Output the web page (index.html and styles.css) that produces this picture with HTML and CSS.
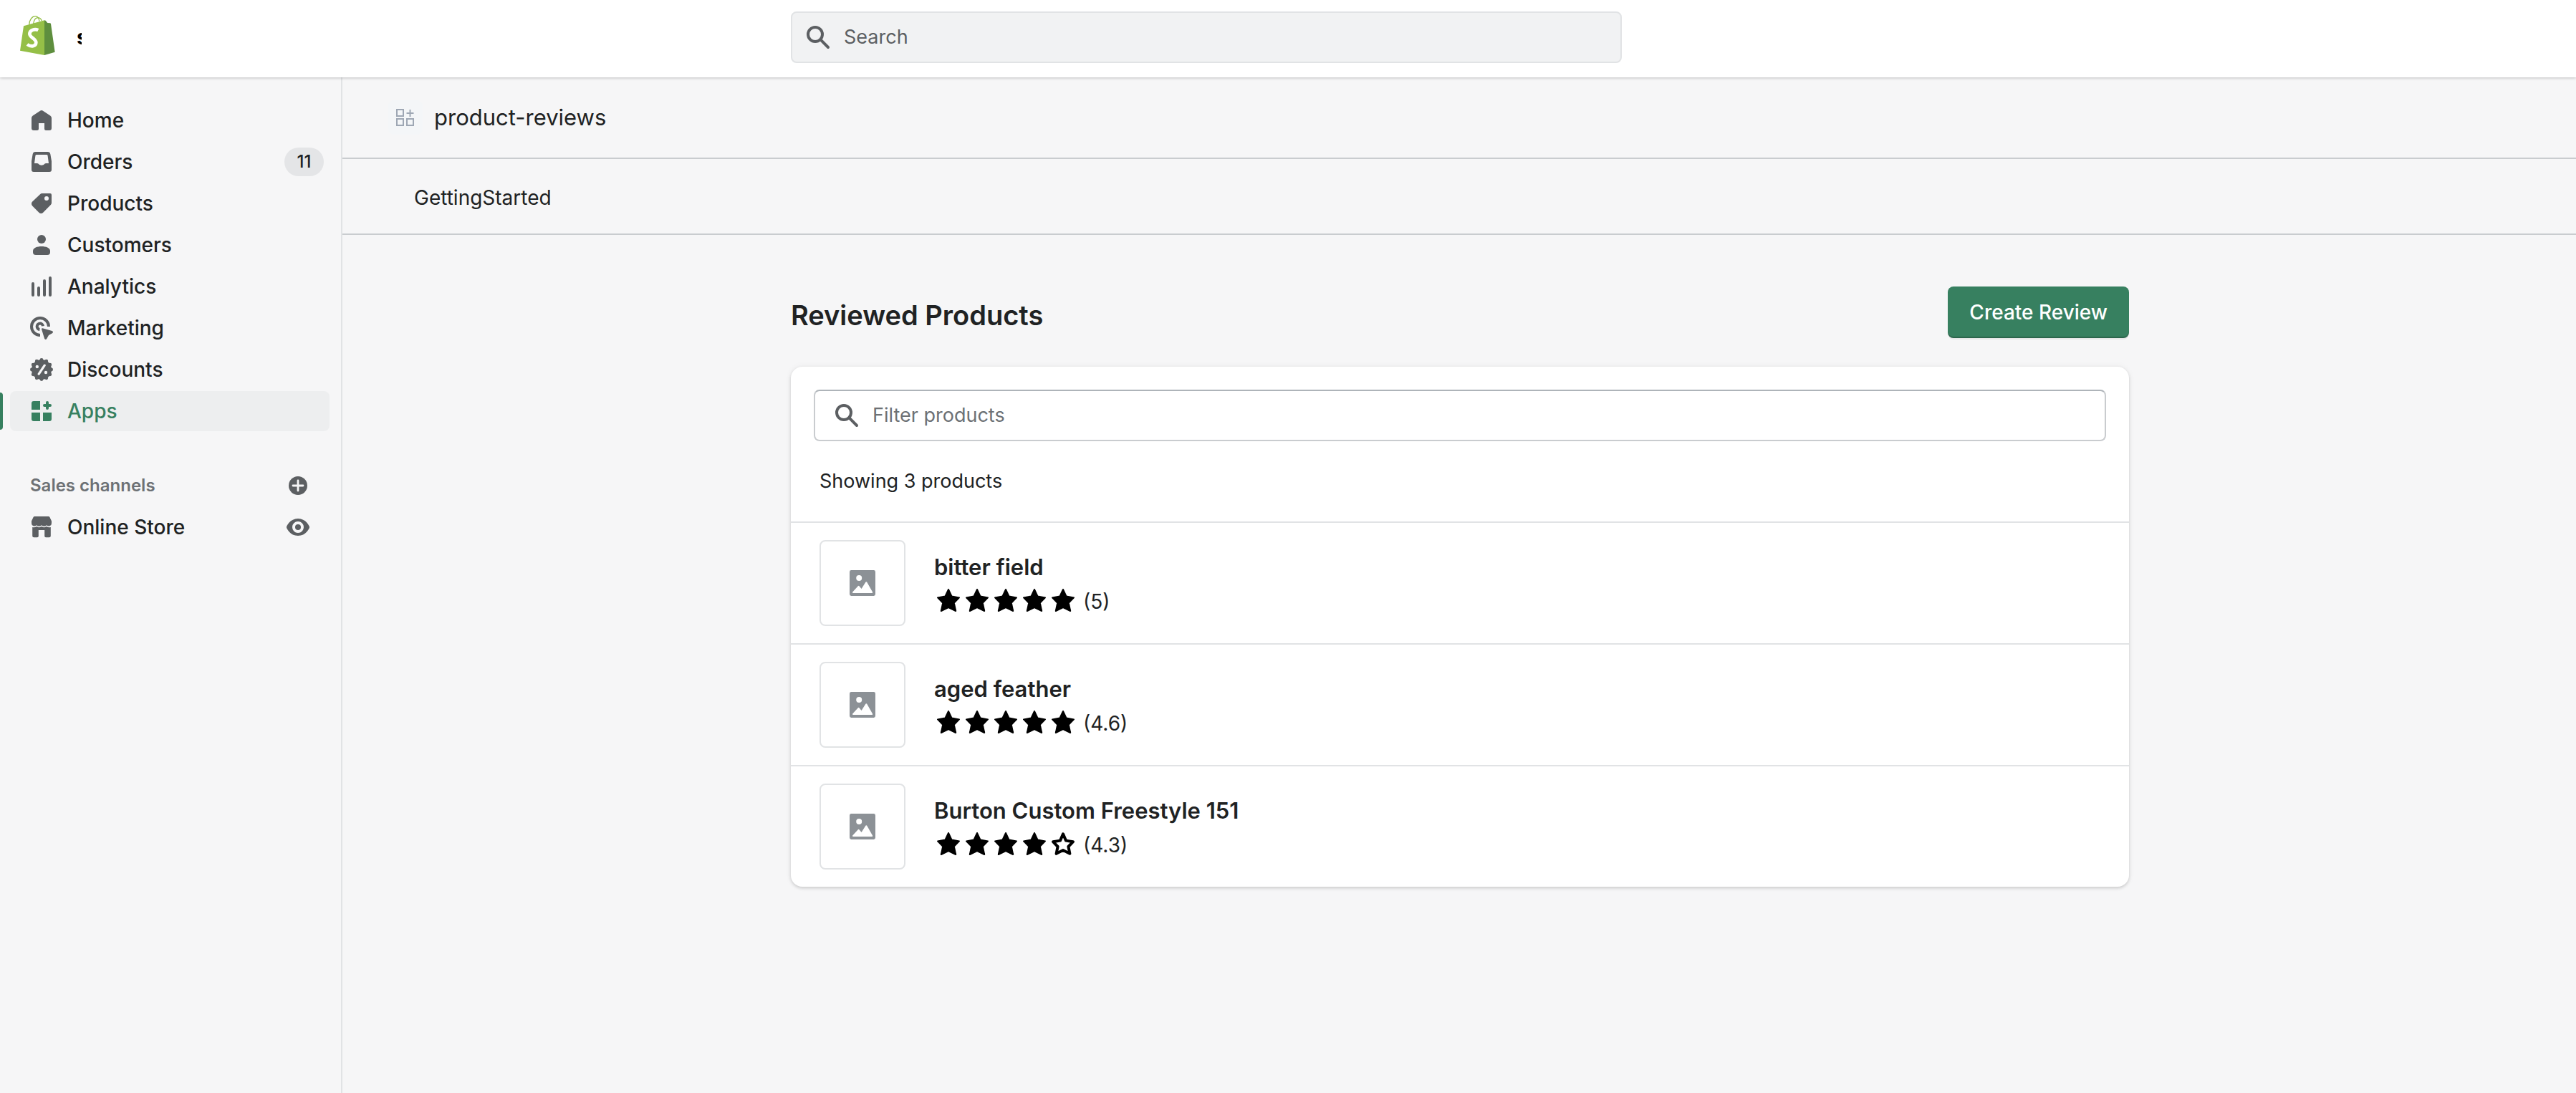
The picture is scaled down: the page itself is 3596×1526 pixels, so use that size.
FILE: index.html
```html
<!DOCTYPE html>
<html lang="en">
<head>
<meta charset="utf-8">
<meta name="viewport" content="width=device-width, initial-scale=1">
<title>product-reviews</title>
<link rel="stylesheet" href="styles.css">
</head>
<body>
<svg class="sprite" aria-hidden="true">
  <symbol id="star" viewBox="0 0 20 20"><path d="M10 2.500l2.300 4.800 5.200.9-3.600 3.700 1.200 5.600L10 15l-5.100 2.500 1.200-5.600L2.500 8.200l5.200-.9z" fill="currentColor" stroke="currentColor" stroke-linejoin="round"/></symbol>
  <symbol id="star-empty" viewBox="0 0 20 20"><path d="M10 3.200l2 4.600 5 .8-3.300 3.400 1 4.900L10 14.500l-4.700 2.400 1-4.900L3 8.600l5-.8z" fill="none" stroke="currentColor" stroke-width="2" stroke-linejoin="round"/></symbol>
  <symbol id="search" viewBox="0 0 20 20"><g fill="none" stroke="currentColor" stroke-width="2"><circle cx="8" cy="8" r="5"/><path d="M11.600 11.600L17 17" stroke-linecap="round"/></g></symbol>
  <symbol id="image" viewBox="0 0 18 18"><path fill="currentColor" fill-rule="evenodd" d="M1.200 0h15.600A1.200 1.200 0 0 1 18 1.200v15.600a1.200 1.200 0 0 1-1.200 1.200H1.200A1.200 1.200 0 0 1 0 16.800V1.200A1.200 1.200 0 0 1 1.200 0zM6.600 3.500a2 2 0 1 0 0 4 2 2 0 0 0 0-4zM2.400 16h13.200c.4 0 .6-.4.4-.8L12.100 8.400a.5.5 0 0 0-.9 0L8.300 13l-1.600-1.900a.5.5 0 0 0-.8 0l-3.800 4.200c-.2.3 0 .7.300.7z"/></symbol>
</svg>

<header class="topbar">
  <div class="brand">
    <svg class="logo" viewBox="82 60 147 192" role="img" aria-label="Shopify">
      <g fill="none" stroke="#95bf47" stroke-width="4"><path d="M120 104c0-20 12-35 25-36 10-1 16 8 18 21"/><path d="M138 99c2-15 9-24 18-25 9 0 14 5 17 13"/></g>
      <path fill="#95bf47" d="M97 109l87-24v146L82 212z"/>
      <path fill="#5e8e3e" d="M184 85l5 1 8 10 12 1 2 3 17 118-44 13z"/>
      <path fill="none" stroke="#fff" stroke-width="14" d="M158 126c-15-7-36 0-36 16 0 15 27 20 27 36 0 17-21 20-37 8"/>
    </svg>
    <span class="store">s</span>
  </div>
  <div class="topbar-main">
    <div class="column">
      <label class="search"><svg class="icon" aria-hidden="true"><use href="#search"/></svg><input type="search" placeholder="Search" aria-label="Search"></label>
    </div>
  </div>
</header>

<div class="frame">
  <nav class="sidebar" aria-label="Main">
    <ul class="nav">
      <li><a class="nav-item" href="#"><svg class="icon" viewBox="0 0 20 20"><path d="M9.200 3.200L3.900 6.700A2 2 0 0 0 3 8.400v7.100A1.500 1.500 0 0 0 4.500 17H7a1 1 0 0 0 1-1v-4h4v4a1 1 0 0 0 1 1h2.500a1.500 1.500 0 0 0 1.500-1.500V8.400a2 2 0 0 0-.9-1.700l-5.300-3.500a1.500 1.500 0 0 0-1.600 0z"/></svg>Home</a></li>
      <li><a class="nav-item" href="#"><svg class="icon" viewBox="0 0 20 20"><path fill-rule="evenodd" d="M5.800 3h8.400a2 2 0 0 1 2 1.700L17 9.500v6a1.500 1.500 0 0 1-1.500 1.500h-11A1.500 1.500 0 0 1 3 15.500v-6l.8-4.800a2 2 0 0 1 2-1.700zm.7 2a.8.8 0 0 0-.8.7L5 11h1.800c.5 0 .9.2 1.200.5.8 1.100 3.200 1.100 4 0 .3-.3.7-.5 1.200-.5H15l-.7-5.300a.8.8 0 0 0-.8-.7z"/></svg>Orders<span class="badge">11</span></a></li>
      <li><a class="nav-item" href="#"><svg class="icon" viewBox="0 0 20 20"><path fill-rule="evenodd" d="M10.400 3H16a1 1 0 0 1 1 1v5.600a2 2 0 0 1-.6 1.400l-5.300 5.400a2 2 0 0 1-2.900 0l-4.600-4.700a2 2 0 0 1 0-2.900L9 3.600a2 2 0 0 1 1.400-.6zm3.100 2a1.500 1.500 0 1 0 0 3 1.500 1.500 0 0 0 0-3z"/></svg>Products</a></li>
      <li><a class="nav-item" href="#"><svg class="icon" viewBox="0 0 20 20"><circle cx="10" cy="6" r="3"/><path d="M4 14.200C4 12 7 11 10 11s6 1 6 3.200v.8a2 2 0 0 1-2 2H6a2 2 0 0 1-2-2z"/></svg>Customers</a></li>
      <li><a class="nav-item" href="#"><svg class="icon" viewBox="0 0 20 20"><path fill="none" stroke="currentColor" stroke-width="2" stroke-linecap="round" d="M4 8v8M8 11v5M12 6v10M16 4v12"/></svg>Analytics</a></li>
      <li><a class="nav-item" href="#"><svg class="icon" viewBox="0 0 20 20"><path fill="none" stroke="currentColor" stroke-width="2" d="M15 9a6 6 0 1 0-6 6M11 8.600a2.100 2.100 0 1 0-2.300 2.400"/><path d="M10.700 10.100l6.600 1.900c.8.2.9 1.200.2 1.600L15 15l-1.400 2.500c-.4.7-1.400.6-1.600-.2L10 10.800c-.1-.4.300-.8.700-.7z"/></svg>Marketing</a></li>
      <li><a class="nav-item" href="#"><svg class="icon" viewBox="0 0 20 20"><circle cx="10" cy="10" r="7"/><circle cx="10" cy="10" r="6.800" fill="none" stroke="currentColor" stroke-width="2.400" stroke-linecap="round" pathLength="12" stroke-dasharray="0 1"/><path d="M12.100 7.100l-4 6" stroke="#f6f6f7" stroke-width="1.600" stroke-linecap="round"/><g fill="#f6f6f7"><circle cx="6.900" cy="8" r="1.100"/><circle cx="13" cy="12" r="1.100"/></g></svg>Discounts</a></li>
      <li><a class="nav-item current" href="#" aria-current="page"><svg class="icon" viewBox="0 0 20 20"><path d="M4.500 3H9v6H3V4.500A1.500 1.500 0 0 1 4.500 3zM3 11h6v6H4.500A1.500 1.500 0 0 1 3 15.500zM11 11h6v4.500a1.500 1.500 0 0 1-1.500 1.500H11z"/><path fill="none" stroke="currentColor" stroke-width="2" stroke-linecap="round" d="M14 4v4M12 6h4"/></svg>Apps</a></li>
    </ul>
    <div class="section">
      <h2 class="section-title">Sales channels</h2>
      <button class="icon-button" type="button" aria-label="Add sales channel"><svg class="icon" viewBox="0 0 20 20"><circle cx="10" cy="10" r="6.500"/><path d="M10 6.500v7M6.500 10h7" stroke="#f6f6f7" stroke-width="1.400" stroke-linecap="round"/></svg></button>
    </div>
    <ul class="nav">
      <li class="channel"><a class="nav-item" href="#"><svg class="icon" viewBox="0 0 20 20"><path d="M5.200 2.500h9.600a1 1 0 0 1 .9.500L17 5.800v1.400a2 2 0 0 1-3.500 1.400 2.300 2.300 0 0 1-3.500 0 2.300 2.300 0 0 1-3.500 0A2 2 0 0 1 3 7.200V5.800L4.300 3a1 1 0 0 1 .9-.5zM3.600 10c1.100.3 2.100.1 3-.5 1 .8 2.300.8 3.400 0 1.100.8 2.400.8 3.400 0 .9.600 1.900.8 3 .5v6.100a1 1 0 0 1-1 1H13a.9.900 0 0 1-.9-.9V12H7.900v4.200a.9.900 0 0 1-.9.900H4.600a1 1 0 0 1-1-1z"/></svg>Online Store</a>
      <button class="icon-button" type="button" aria-label="View your online store"><svg class="icon" viewBox="0 0 20 20"><path fill-rule="evenodd" d="M17.900 9.400C17.800 9.200 15.600 4 10 4S2.200 9.200 2.100 9.400a1.600 1.600 0 0 0 0 1.200C2.200 10.800 4.400 16 10 16s7.800-5.200 7.900-5.400a1.600 1.600 0 0 0 0-1.200zM10 6a4 4 0 1 1 0 8 4 4 0 0 1 0-8z"/><circle cx="10" cy="10" r="2"/></svg></button></li>
    </ul>
  </nav>

  <main class="main">
    <div class="app-header">
      <svg class="app-icon" viewBox="0 0 48 48" aria-hidden="true"><rect width="48" height="48" rx="8" fill="#f4f6f8"/><path fill="none" stroke="#9ea7b4" stroke-width="2" d="M12 13h9v9h-9zM12 26h9v9h-9zM26 26h9v9h-9zM30.500 13v10M25.500 18h10"/></svg>
      <span>product-reviews</span>
    </div>
    <div class="app-tabs"><a href="#">GettingStarted</a></div>

    <div class="column page">
      <div class="page-header">
        <h1>Reviewed Products</h1>
        <button class="primary" type="button">Create Review</button>
      </div>
      <section class="card">
        <div class="filters">
          <label class="filter"><svg class="icon" aria-hidden="true"><use href="#search"/></svg><input type="text" placeholder="Filter products" aria-label="Filter products"></label>
          <p class="count">Showing 3 products</p>
        </div>
        <ul class="products">
          <li class="product">
            <div class="thumb"><svg aria-hidden="true"><use href="#image"/></svg></div>
            <div class="info"><h3>bitter field</h3>
              <div class="rating"><svg><use href="#star"/></svg><svg><use href="#star"/></svg><svg><use href="#star"/></svg><svg><use href="#star"/></svg><svg><use href="#star"/></svg><span>(5)</span></div></div>
          </li>
          <li class="product">
            <div class="thumb"><svg aria-hidden="true"><use href="#image"/></svg></div>
            <div class="info"><h3>aged feather</h3>
              <div class="rating"><svg><use href="#star"/></svg><svg><use href="#star"/></svg><svg><use href="#star"/></svg><svg><use href="#star"/></svg><svg><use href="#star"/></svg><span>(4.6)</span></div></div>
          </li>
          <li class="product">
            <div class="thumb"><svg aria-hidden="true"><use href="#image"/></svg></div>
            <div class="info"><h3>Burton Custom Freestyle 151</h3>
              <div class="rating"><svg><use href="#star"/></svg><svg><use href="#star"/></svg><svg><use href="#star"/></svg><svg><use href="#star"/></svg><svg><use href="#star-empty"/></svg><span>(4.3)</span></div></div>
          </li>
        </ul>
      </section>
    </div>
  </main>
</div>
</body>
</html>
```
FILE: styles.css
```css
* { box-sizing: border-box; }

body {
  margin: 0;
  min-height: 100vh;
  display: flex;
  flex-direction: column;
  background: #f6f6f7;
  color: #202223;
  font-family: Inter, "Liberation Sans", sans-serif;
  font-size: 28px;
  line-height: 40px;
}

h1, h2, h3, p, ul { margin: 0; padding: 0; }
ul { list-style: none; }
a { color: inherit; text-decoration: none; }
button, input { font: inherit; color: inherit; }
svg { display: block; flex: none; }

.sprite { position: absolute; width: 0; height: 0; }
.icon { width: 40px; height: 40px; fill: currentColor; color: #5c5f62; }

/* Top bar */
.topbar {
  display: flex;
  align-items: center;
  padding: 16px 0 20px;
  background: #fff;
  box-shadow: 0 0 4px rgba(0, 0, 0, .2), 0 2px 4px rgba(0, 0, 0, .08);
  position: relative;
}
.brand {
  flex: none;
  width: 478px;
  padding-left: 28px;
  display: flex;
  align-items: center;
  gap: 30px;
}
.logo { width: 49px; height: 64px; }
.store {
  width: 7px;
  overflow: hidden;
  font-weight: 700;
  color: #000;
}
.topbar-main { flex: 1; }
.column {
  width: 100%;
  max-width: 1994px;
  margin: 0 auto;
  padding: 0 62px 0 64px;
}
.search, .filter { display: flex; align-items: center; gap: 16px; height: 72px; border-radius: 8px; }
.search {
  max-width: 1160px;
  padding: 0 16px;
  background: #f1f2f3;
  border: 2px solid #e1e3e5;
}
.search input, .filter input {
  flex: 1;
  min-width: 0;
  padding: 0;
  border: 0;
  outline: 0;
  background: none;
  appearance: none;
  font-size: 27px;
}
.search input::placeholder { color: #5c5f62; opacity: 1; }
.filter input::placeholder { color: #6d7175; opacity: 1; }

/* Sidebar */
.frame { flex: 1; display: flex; }
.sidebar {
  flex: none;
  width: 478px;
  padding: 32px 16px 32px 14px;
  border-right: 2px solid #e1e3e5;
}
.nav { display: grid; gap: 2px; }
.nav-item {
  flex: 1;
  height: 56px;
  padding: 0 8px 0 24px;
  display: flex;
  align-items: center;
  gap: 16px;
  border-radius: 8px;
  font-weight: 500;
}
.current { position: relative; background: #edeeef; color: #378060; }
.current .icon { color: #378060; }
.current::before {
  content: "";
  position: absolute;
  left: -14px;
  top: 2px;
  bottom: 2px;
  width: 4px;
  border-radius: 0 6px 6px 0;
  background: #378060;
}
.badge {
  margin-left: auto;
  min-width: 55px;
  border-radius: 20px;
  background: #e4e5e7;
  font-size: 24px;
  text-align: center;
}
.section {
  margin: 56px 0 10px;
  padding: 0 24px 0 28px;
  display: flex;
  align-items: center;
  justify-content: space-between;
}
.section-title { font-size: 24px; font-weight: 600; color: #6d7175; }
.icon-button { padding: 0; border: 0; background: none; }
.channel { display: flex; align-items: center; padding-right: 24px; }

/* App chrome */
.main { flex: 1; min-width: 0; }
.app-header, .app-tabs { display: flex; align-items: center; border-bottom: 2px solid #c9cccf; }
.app-header { height: 114px; padding: 0 64px; gap: 16px; font-size: 31px; }
.app-tabs { height: 106px; padding: 4px 100px 0; }
.app-icon { width: 48px; height: 48px; }

/* Page */
.page { padding-top: 72px; padding-bottom: 72px; }
.page-header {
  display: flex;
  align-items: flex-start;
  justify-content: space-between;
  margin-bottom: 32px;
}
h1 { font-size: 38px; line-height: 80px; font-weight: 600; }
.primary {
  height: 72px;
  padding: 0 30px;
  border: 0;
  border-radius: 8px;
  background: #378060;
  color: #fff;
  font-weight: 500;
  box-shadow: 0 2px 0 rgba(0, 0, 0, .06), inset 0 -2px 0 rgba(0, 0, 0, .2);
}

.card {
  border-radius: 16px;
  background: #fff;
  box-shadow: 0 0 10px rgba(23, 24, 24, .06), 0 2px 4px rgba(0, 0, 0, .15);
}
.filters { padding: 32px 32px 36px; }
.filter { padding: 0 24px; border: 2px solid #c9cccf; border-top-color: #aeb4b9; }
.count { margin-top: 36px; padding-left: 8px; font-size: 27px; }
.product {
  display: flex;
  gap: 40px;
  padding: 24px 40px;
  border-top: 2px solid #e1e3e5;
}
.thumb {
  flex: none;
  width: 120px;
  height: 120px;
  display: grid;
  place-items: center;
  border: 2px solid #e1e3e5;
  border-radius: 8px;
  color: #8c9196;
}
.thumb svg { width: 36px; height: 36px; }
.info { padding-top: 18px; display: grid; gap: 6px; align-content: start; }
h3 { font-size: 31px; font-weight: 600; }
.rating { display: flex; line-height: 44px; }
.rating svg { width: 40px; height: 40px; color: #000; }
.rating span { margin-left: 8px; }
```
